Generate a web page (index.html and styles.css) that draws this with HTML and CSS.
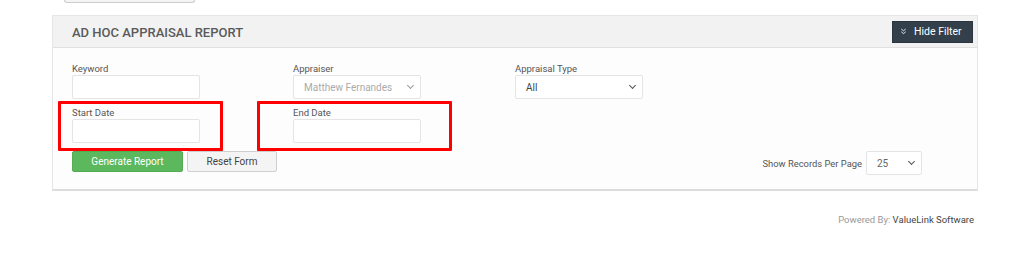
FILE: index.html
```html
<!DOCTYPE html>
<html>
<head>
    <link rel="stylesheet" href="styles.css">
</head>
<body>
    <div class="top-stub"></div>

    <div class="panel">
        <div class="panel-head">
            <h2>AD HOC APPRAISAL REPORT</h2>
            <button class="btn-dark">
                <svg width="7" height="7" viewBox="0 0 8 8"><path d="M1.5 1.2 L4 3.2 L6.5 1.2 M1.5 4.4 L4 6.4 L6.5 4.4" fill="none" stroke="#e8ecef" stroke-width="1.1"/></svg>
                Hide Filter
            </button>
        </div>
        <div class="panel-body">
            <div class="grid">
                <div class="field">
                    <label>Keyword</label>
                    <div class="input"></div>
                </div>
                <div class="field">
                    <label>Appraiser</label>
                    <div class="input select disabled"><span>Matthew Fernandes</span><i class="caret"></i></div>
                </div>
                <div class="field">
                    <label>Appraisal Type</label>
                    <div class="input select"><span>All</span><i class="caret"></i></div>
                </div>
                <div class="field marked first">
                    <label>Start Date</label>
                    <div class="input"></div>
                </div>
                <div class="field marked second">
                    <label>End Date</label>
                    <div class="input"></div>
                </div>
            </div>
            <div class="actions">
                <button class="btn-green">Generate Report</button>
                <button class="btn-light">Reset Form</button>
                <div class="per-page">
                    <span>Show Records Per Page</span>
                    <div class="input select small"><span>25</span><i class="caret"></i></div>
                </div>
            </div>
        </div>
    </div>

    <div class="footer"><span class="muted">Powered By:</span> ValueLink Software</div>
</body>
</html>
```

FILE: styles.css
```css
body {
    margin: 0;
    background: #fff;
    font-family: Roboto, "Liberation Sans", sans-serif;
    color: #555;
}

.top-stub {
    margin-left: 64px;
    width: 129px;
    height: 2px;
    border: 1px solid #ccc;
    border-top: none;
    border-radius: 0 0 3px 3px;
    background: #f4f4f4;
}

.panel {
    margin: 12px 46px 0 52px;
    border: 1px solid #e6e6e6;
    border-bottom: 2px solid #dcdcdc;
    background: #fdfdfd;
}

.panel-head {
    display: flex;
    align-items: center;
    justify-content: space-between;
    height: 31px;
    padding: 0 4px 0 19px;
    background: #f2f2f2;
    border-bottom: 1px solid #e0e0e0;
}

.panel-head h2 {
    margin: 0;
    padding-top: 2px;
    font-size: 13px;
    font-weight: 500;
    color: #5a5a5a;
}

.btn-dark {
    display: flex;
    align-items: center;
    gap: 7px;
    height: 22px;
    width: 81px;
    padding: 0 0 0 7px;
    border: 1px solid #2b3540;
    background: #333f4b;
    color: #fff;
    font-family: inherit;
    font-size: 10.5px;
    font-weight: 400;
}

.panel-body {
    padding: 14px 19px 14px 19px;
}

.grid {
    display: grid;
    grid-template-columns: 221px 222px 128px;
}

.field {
    width: 128px;
    height: 44px;
    position: relative;
}

.field label {
    display: block;
    height: 13px;
    font-size: 9.5px;
    line-height: 13px;
    color: #555;
}

.input {
    box-sizing: border-box;
    height: 24px;
    width: 128px;
    border: 1px solid #e4e4e4;
    border-radius: 2px;
    background: #fff;
}

.select {
    display: flex;
    align-items: center;
    justify-content: space-between;
    padding: 0 7px 0 10px;
    font-size: 10px;
    color: #444;
}

.select.disabled {
    color: #aaa;
}

.caret {
    width: 4px;
    height: 4px;
    border-right: 1.3px solid #555;
    border-bottom: 1.3px solid #555;
    transform: rotate(45deg);
    margin-top: -3px;
}

.disabled .caret {
    border-color: #999;
}

.marked::after {
    content: "";
    position: absolute;
    top: -5px;
    bottom: -1px;
    border: 3px solid #f00;
    border-radius: 1px;
}

.marked.first::after {
    left: -14px;
    right: -23px;
}

.marked.second::after {
    left: -36px;
    right: -31px;
}

.actions {
    display: flex;
    align-items: flex-start;
    gap: 4px;
    margin-top: 1px;
}

.btn-green,
.btn-light {
    height: 21px;
    border-radius: 2px;
    font-family: inherit;
    font-size: 10px;
}

.btn-green {
    width: 111px;
    border: 1px solid #55ac55;
    background: #5cb85c;
    color: #fff;
}

.btn-light {
    width: 90px;
    border: 1px solid #cfcfcf;
    background: #f4f4f4;
    color: #444;
}

.per-page {
    display: flex;
    align-items: center;
    gap: 4px;
    margin-left: auto;
    margin-right: 36px;
    font-size: 9.4px;
    color: #555;
}

.select.small {
    width: 56px;
    color: #666;
}

.footer {
    margin: 23px 50px 0 0;
    text-align: right;
    font-size: 9.5px;
    color: #444;
}

.muted {
    color: #999;
}
```
